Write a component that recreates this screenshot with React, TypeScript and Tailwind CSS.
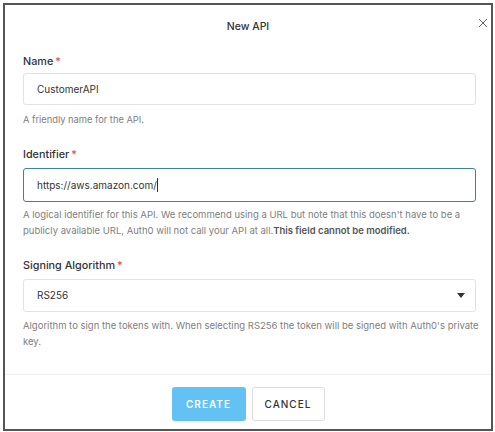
import React from "react";

export default function App() {
  const font = { fontFamily: "Inter, 'Noto Sans', sans-serif" };
  return (
    <div className="w-[495px] h-[432px] bg-white pt-[3px] pl-[3px]" style={font}>
      <div className="w-[490px] h-[428px] border-2 border-[#555] flex flex-col relative">
        <div className="h-[42px] flex items-center justify-center relative">
          <span className="text-[10.5px] font-medium text-[#333] mt-[1px]">New API</span>
          <svg className="absolute left-[473px] top-[13px]" width="10" height="10" viewBox="0 0 10 10">
            <path d="M1 1 L9 9 M9 1 L1 9" stroke="#666" strokeWidth="1" fill="none" />
          </svg>
        </div>
        <div className="pl-[18px] w-[471px] flex flex-col">
          <label className="text-[10.8px] font-medium text-[#333] leading-[16px] mt-[7px]">
            Name<span className="text-[#e04a3a] ml-[2px]">*</span>
          </label>
          <div className="mt-[3px] h-[32px] w-[453px] border border-[#e2e2e2] rounded-[3px] flex items-center pl-[13px] text-[10px] text-[#333]">
            CustomerAPI
          </div>
          <p className="text-[9.3px] text-[#808080] leading-[16px] mt-[7px]">A friendly name for the API.</p>
          <label className="text-[10.8px] font-medium text-[#333] leading-[16px] mt-[19px]">
            Identifier<span className="text-[#e04a3a] ml-[2px]">*</span>
          </label>
          <div className="mt-[5px] h-[34px] w-[453px] border-[1.5px] border-[#3d7fa6] rounded-[3px] flex items-center pl-[13px] text-[10px] text-[#333]">
            https://aws.amazon.com/<span className="inline-block w-px h-[14px] bg-[#333]"></span>
          </div>
          <p className="text-[9.5px] text-[#808080] leading-[16px] mt-[5px] whitespace-nowrap">
            A logical identifier for this API. We recommend using a URL but note that this doesn't have to be a
            <br />
            publicly available URL, Auth0 will not call your API at all.<span className="font-semibold text-[#555]">This field cannot be modified.</span>
          </p>
          <label className="text-[10.8px] font-medium text-[#333] leading-[16px] mt-[19px]">
            Signing Algorithm<span className="text-[#e04a3a] ml-[2px]">*</span>
          </label>
          <div className="mt-[5px] h-[33px] w-[453px] border border-[#e2e2e2] rounded-[3px] flex items-center justify-between pl-[13px] pr-[10px] text-[10px] text-[#333]">
            <span>RS256</span>
            <svg width="8" height="5" viewBox="0 0 8 5">
              <path d="M0 0 L8 0 L4 5 Z" fill="#333" />
            </svg>
          </div>
          <p className="text-[9.5px] text-[#808080] leading-[16px] mt-[6px] whitespace-nowrap">
            Algorithm to sign the tokens with. When selecting RS256 the token will be signed with Auth0's private
            <br />
            key.
          </p>
        </div>
        <div className="mt-auto border-t border-[#eee] h-[55px] flex items-start justify-center gap-[6px] pt-[12px]">
          <button className="w-[74px] h-[34px] rounded-[3px] bg-[#63c1f4] text-white text-[10px] font-semibold tracking-[1px]">CREATE</button>
          <button className="w-[73px] h-[34px] rounded-[3px] border border-[#ddd] bg-white text-[#333] text-[10px] font-medium tracking-[1px]">CANCEL</button>
        </div>
      </div>
    </div>
  );
}
